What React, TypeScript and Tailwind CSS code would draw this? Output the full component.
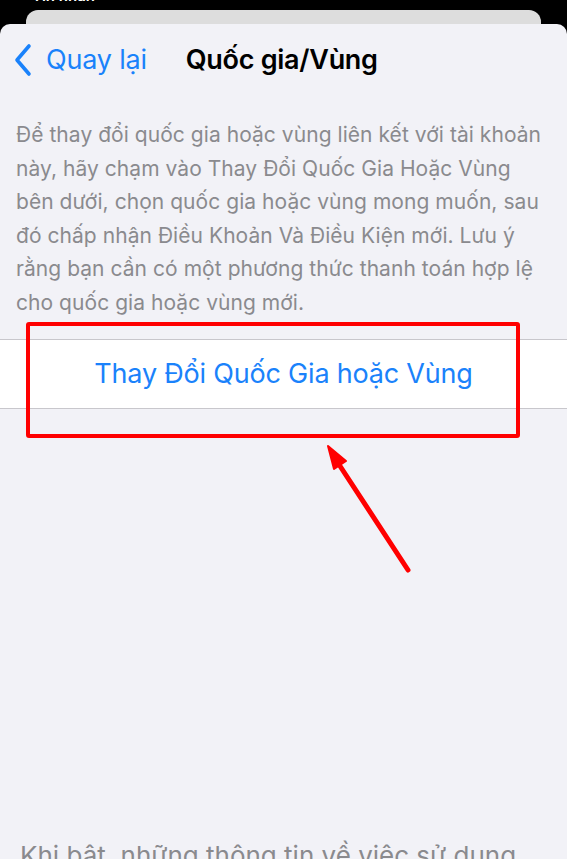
import React from "react";

const font = { fontFamily: "Inter, 'Noto Sans', sans-serif" };

function BackChevron() {
  return (
    <svg width="20" height="34" viewBox="0 0 20 34" fill="none">
      <path d="M16 3 L4 17 L16 31" stroke="#1a82fb" strokeWidth="3.6" strokeLinecap="round" strokeLinejoin="round" />
    </svg>
  );
}

export default function App() {
  return (
    <div className="relative w-[567px] h-[859px] overflow-hidden bg-black flex flex-col" style={font}>
      {/* status area behind the sheets */}
      <div className="h-[10px] overflow-hidden relative">
        <div className="absolute left-[22px] bottom-[6px] text-[15px] leading-[16px] text-white font-semibold">‹ Tin nhắn</div>
      </div>
      {/* stacked sheet peeking behind */}
      <div className="mx-[26px] h-[14px] rounded-t-[12px] bg-[#dddddd]" />
      {/* front sheet */}
      <div className="flex-1 rounded-t-[10px] bg-[#f2f2f7] flex flex-col">
        <div className="h-[72px] flex items-center">
          <div className="pl-[13px] flex items-center">
            <BackChevron />
          </div>
          <span className="ml-[13px] text-[27px] text-[#1a82fb] tracking-[-0.2px]">Quay lại</span>
          <span className="ml-[39px] text-[27px] font-semibold text-black tracking-[-0.3px]">Quốc gia/Vùng</span>
        </div>
        <p className="mt-[22px] px-[16px] text-[21px] leading-[33.5px] text-[#8a8a8e] tracking-[0.05px] whitespace-nowrap">
          Để thay đổi quốc gia hoặc vùng liên kết với tài khoản
          <br />
          này, hãy chạm vào Thay Đổi Quốc Gia Hoặc Vùng
          <br />
          bên dưới, chọn quốc gia hoặc vùng mong muốn, sau
          <br />
          đó chấp nhận Điều Khoản Và Điều Kiện mới. Lưu ý
          <br />
          rằng bạn cần có một phương thức thanh toán hợp lệ
          <br />
          cho quốc gia hoặc vùng mới.
        </p>
        <div className="mt-[20px] h-[70px] bg-white border-y border-[#c8c7cc] flex items-center justify-center">
          <span className="text-[27px] text-[#1a82fb] tracking-[-0.2px]">Thay Đổi Quốc Gia hoặc Vùng</span>
        </div>
        <div className="flex-1" />
        <p className="px-[20px] text-[26px] leading-[34px] text-[#8a8a8e] whitespace-nowrap mb-[-14px]">
          Khi bật, những thông tin về việc sử dụng
        </p>
      </div>

      {/* highlight box */}
      <div className="absolute left-[26px] top-[322px] w-[494px] h-[116px] border-[4px] border-[#ff0000] rounded-[3px]" />
      {/* pointer arrow */}
      <svg className="absolute left-0 top-0" width="567" height="859" viewBox="0 0 567 859">
        <line x1="408" y1="570" x2="340" y2="466" stroke="#ff0000" strokeWidth="5" strokeLinecap="round" />
        <polygon points="328,446 346,461 334,469" fill="#ff0000" stroke="#ff0000" strokeWidth="2" strokeLinejoin="round" />
      </svg>
    </div>
  );
}
